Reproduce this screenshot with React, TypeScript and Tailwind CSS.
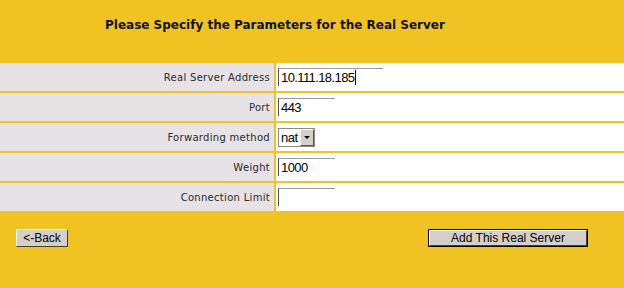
export default function App() {
  const rows = [
    { label: "Real Server Address", kind: "wide", value: "10.111.18.185" },
    { label: "Port", kind: "text", value: "443" },
    { label: "Forwarding method", kind: "select", value: "nat" },
    { label: "Weight", kind: "text", value: "1000" },
    { label: "Connection Limit", kind: "text", value: "" },
  ];

  return (
    <div className="w-[624px] h-[288px] bg-[#F0C322] overflow-hidden">
      {/* title */}
      <div className="h-[61px] pl-[105px] pt-[18px]">
        <h1 className="font-['DejaVu_Sans',sans-serif] font-bold text-[12px] leading-[14px] text-[#111]">
          Please Specify the Parameters for the Real Server
        </h1>
      </div>

      {/* parameter table */}
      <div className="grid grid-cols-[274px_1fr] gap-[2px] py-[2px]">
        {rows.map((r) => (
          <div key={r.label} className="contents">
            <div className="h-[28px] bg-[#E6E2E6] flex items-center justify-end pr-[4px] font-['DejaVu_Sans',sans-serif] text-[10px] tracking-[0.3px] text-[#2a2a2a]">
              {r.label}
            </div>
            <div className="h-[28px] bg-white flex items-center pl-[2px]">
              {r.kind === "select" ? (
                <div className="h-[19px] w-[37px] flex border border-[#8a8a8a] bg-white">
                  <span className="flex-1 pl-[2px] font-['Liberation_Sans',Arial,sans-serif] text-[13px] leading-[17px] tracking-[-0.5px] text-black">
                    {r.value}
                  </span>
                  <span className="w-[14px] bg-[#D4D0C8] border-t border-l border-t-white border-l-white border-b border-r border-b-[#555] border-r-[#555] flex items-center justify-center">
                    <span className="w-0 h-0 border-l-[3px] border-r-[3px] border-t-[3px] border-l-transparent border-r-transparent border-t-black" />
                  </span>
                </div>
              ) : (
                <div
                  className={`h-[18px] ${r.kind === "wide" ? "w-[105px]" : "w-[57px]"} border-t border-l border-t-[#9a9a9a] border-l-[#505050] flex items-center pl-[2px] font-['Liberation_Sans',Arial,sans-serif] text-[13px] tracking-[-0.6px] text-black`}
                >
                  {r.value}
                  {r.kind === "wide" && <span className="ml-[1px] w-px h-[15px] bg-black" />}
                </div>
              )}
            </div>
          </div>
        ))}
      </div>

      {/* buttons */}
      <div className="flex justify-between items-start pt-[16px] pl-[16px] pr-[36px]">
        <button className="h-[18px] w-[52px] bg-[#D4D0C8] border-t border-l border-t-white border-l-white border-b border-r border-b-[#404040] border-r-[#404040] font-['Liberation_Sans',Arial,sans-serif] text-[12px] leading-none text-black">
          &lt;-Back
        </button>
        <div className="flex border border-black">
          <button className="h-[16px] w-[158px] bg-[#D4D0C8] border-t border-l border-t-white border-l-white border-b border-r border-b-[#404040] border-r-[#404040] font-['Liberation_Sans',Arial,sans-serif] text-[12px] leading-none text-black">
            Add This Real Server
          </button>
        </div>
      </div>
    </div>
  );
}
